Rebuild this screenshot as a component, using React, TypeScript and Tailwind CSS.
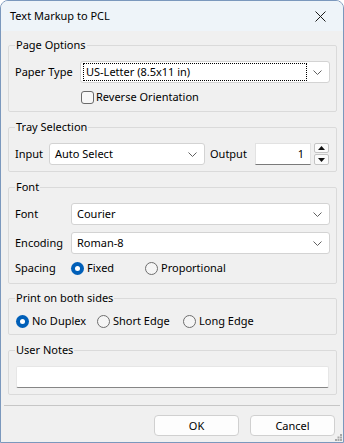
import React from 'react';

const FONT = { fontFamily: '"Segoe UI", "Noto Sans", sans-serif' };

function Chevron() {
  return (
    <svg width="9" height="5" viewBox="0 0 9 5" className="shrink-0">
      <path d="M0.5 0.5 L4.5 4.5 L8.5 0.5" fill="none" stroke="#606060" strokeWidth="1" />
    </svg>
  );
}

function Select({ value, width, focused }: { value: string; width: string; focused?: boolean }) {
  return (
    <div className={`${width} h-[22px] shrink-0 bg-white border border-[#d3d3d3] rounded-[3px] flex items-center pl-[2px] pr-[7px]`}>
      <div className={`flex-1 h-[18px] flex items-center pl-[2px] ${focused ? 'border border-dotted border-black mr-[6px]' : 'border border-transparent mr-[6px]'}`}>
        <span className="leading-[16px]">{value}</span>
      </div>
      <Chevron />
    </div>
  );
}

function Radio({ checked, label, className }: { checked?: boolean; label: string; className?: string }) {
  return (
    <div className={`flex items-center h-[16px] ${className ?? ''}`}>
      {checked ? (
        <span className="w-[13px] h-[13px] rounded-full bg-[#005fb8] flex items-center justify-center shrink-0">
          <span className="w-[5px] h-[5px] rounded-full bg-white" />
        </span>
      ) : (
        <span className="w-[13px] h-[13px] rounded-full border border-[#6e6e6e] bg-[#f5f5f5] shrink-0" />
      )}
      <span className="ml-[3px] leading-[16px]">{label}</span>
    </div>
  );
}

function Group({ title, className, children }: { title: string; className?: string; children: React.ReactNode }) {
  return (
    <fieldset className={`border border-[#dadada] rounded-[2px] pl-[6px] pr-[6px] ${className ?? ''}`}>
      <legend className="px-[1px] leading-[16px] text-[11px]">{title}</legend>
      {children}
    </fieldset>
  );
}

export default function App() {
  return (
    <div className="w-[344px] h-[443px] bg-[#f0f0f0] border border-[#7b98bd] rounded-t-[8px] flex flex-col text-[11px] text-black overflow-hidden" style={FONT}>
      {/* title bar */}
      <div className="h-[30px] shrink-0 bg-[#eef4f9] flex items-center pl-[9px] pr-[17px]">
        <span className="text-[11px] leading-[16px] flex-1">Text Markup to PCL</span>
        <svg width="11" height="11" viewBox="0 0 11 11">
          <path d="M0.5 0.5 L10.5 10.5 M10.5 0.5 L0.5 10.5" stroke="#1a1a1a" strokeWidth="1" />
        </svg>
      </div>

      <div className="flex-1 flex flex-col pl-[7px] pr-[6px] pt-[6px]">
        <Group title="Page Options" className="pt-[8px] pb-[6px]">
          <div className="flex items-center">
            <span className="w-[65px] leading-[16px]">Paper Type</span>
            <Select value="US-Letter (8.5x11 in)" width="w-[250px]" focused />
          </div>
          <div className="flex items-center h-[16px] mt-[6px] pl-[66px]">
            <span className="w-[13px] h-[13px] rounded-[3px] border border-[#6a6a6a] bg-[#f7f7f7] shrink-0" />
            <span className="ml-[2px] leading-[16px]">Reverse Orientation</span>
          </div>
        </Group>

        <Group title="Tray Selection" className="mt-[7px] pt-[8px] pb-[6px]">
          <div className="flex items-center">
            <span className="w-[34px] leading-[16px]">Input</span>
            <Select value="Auto Select" width="w-[156px]" />
            <span className="ml-[5px] w-[45px] leading-[16px]">Output</span>
            <div className="w-[56px] h-[22px] bg-white border border-[#e2e2e2] border-b-[#7a7a7a] flex items-center justify-end pr-[6px]">
              <span className="leading-[16px]">1</span>
            </div>
            <div className="ml-[3px] flex flex-col gap-[1px]">
              <div className="w-[15px] h-[10px] bg-[#fbfbfb] border border-[#c4c4c4] rounded-[2px] flex items-center justify-center">
                <svg width="7" height="4" viewBox="0 0 7 4"><path d="M3.5 0 L7 4 L0 4 Z" fill="#111" /></svg>
              </div>
              <div className="w-[15px] h-[11px] bg-[#fbfbfb] border border-[#c4c4c4] rounded-[2px] flex items-center justify-center">
                <svg width="7" height="4" viewBox="0 0 7 4"><path d="M0 0 L7 0 L3.5 4 Z" fill="#111" /></svg>
              </div>
            </div>
          </div>
        </Group>

        <Group title="Font" className="mt-[7px] pt-[8px] pb-[7px]">
          <div className="flex items-center">
            <span className="w-[56px] leading-[16px]">Font</span>
            <Select value="Courier" width="w-[259px]" />
          </div>
          <div className="flex items-center mt-[7px]">
            <span className="w-[56px] leading-[16px]">Encoding</span>
            <Select value="Roman-8" width="w-[259px]" />
          </div>
          <div className="flex items-center mt-[6px]">
            <span className="w-[56px] leading-[16px]">Spacing</span>
            <Radio checked label="Fixed" className="w-[74px]" />
            <Radio label="Proportional" />
          </div>
        </Group>

        <Group title="Print on both sides" className="mt-[6px] pt-[7px] pb-[5px]">
          <div className="flex items-center pl-[1px]">
            <Radio checked label="No Duplex" className="w-[81px]" />
            <Radio label="Short Edge" className="w-[86px]" />
            <Radio label="Long Edge" />
          </div>
        </Group>

        <Group title="User Notes" className="mt-[7px] pt-[8px] pb-[6px]">
          <div className="ml-[1px] w-[313px] h-[22px] bg-white border border-[#e6e6e6] border-b-[#868686] rounded-[2px]" />
        </Group>
      </div>

      {/* footer */}
      <div className="shrink-0 mx-[3px] border-t border-[#c6c6c6] mt-[10px]" />
      <div className="shrink-0 flex justify-end gap-[11px] pt-[9px] pb-[6px] pr-[8px] relative">
        <button className="w-[85px] h-[21px] bg-[#fdfdfd] border border-[#d0d0d0] rounded-[4px] text-[11px] leading-[16px]">OK</button>
        <button className="w-[85px] h-[21px] bg-[#fdfdfd] border border-[#d0d0d0] rounded-[4px] text-[11px] leading-[16px]">Cancel</button>
        <svg width="7" height="7" viewBox="0 0 7 7" className="absolute right-[1px] bottom-[1px]">
          <g fill="#a8a8a8">
            <rect x="5" y="0" width="2" height="2" />
            <rect x="2.5" y="2.5" width="2" height="2" />
            <rect x="5" y="2.5" width="2" height="2" />
            <rect x="0" y="5" width="2" height="2" />
            <rect x="2.5" y="5" width="2" height="2" />
            <rect x="5" y="5" width="2" height="2" />
          </g>
        </svg>
      </div>
    </div>
  );
}
